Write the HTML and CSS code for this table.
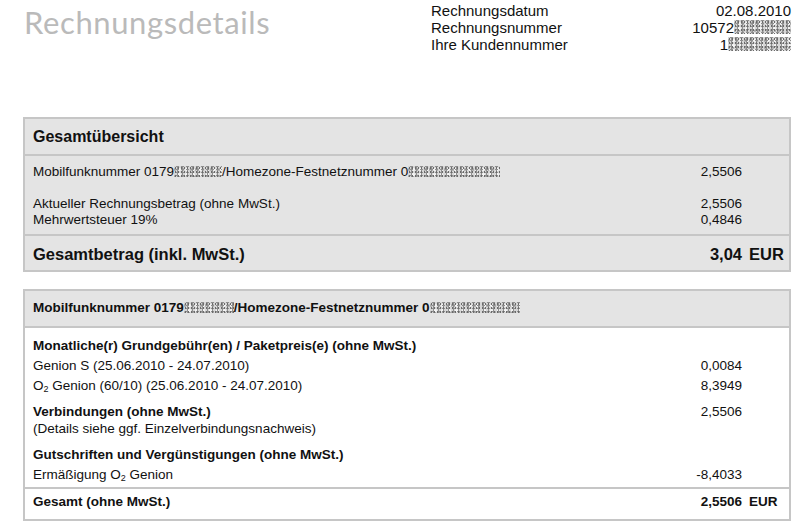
FILE: index.html
```html
<!doctype html>
<html>
	<head>
		<meta charset="utf-8">
		<title>Rechnungsdetails</title>
		<link rel="stylesheet" href="styles.css">
	</head>
	<body>
		<div class="top">
			<h1 class="title">Rechnungsdetails</h1>
			<div class="meta">
				<div class="meta-row"><span>Rechnungsdatum</span><span>02.08.2010</span></div>
				<div class="meta-row"><span>Rechnungsnummer</span><span>10572<i class="blur meta-blur1"></i></span></div>
				<div class="meta-row"><span>Ihre Kundennummer</span><span>1<i class="blur meta-blur2"></i></span></div>
			</div>
		</div>

		<!-- Gesamtuebersicht -->
		<div class="box grey">
			<div class="box-head big">Gesamtübersicht</div>
			<div class="box-body">
				<div class="row"><span>Mobilfunknummer 0179<i class="blur b-a"></i>/Homezone-Festnetznummer 0<i class="blur b-b"></i></span><span class="val">2,5506</span><span></span></div>
				<div class="row empty"><span></span><span></span><span></span></div>
				<div class="row"><span>Aktueller Rechnungsbetrag (ohne MwSt.)</span><span class="val">2,5506</span><span></span></div>
				<div class="row"><span>Mehrwertsteuer 19%</span><span class="val">0,4846</span><span></span></div>
			</div>
			<div class="box-foot big"><div class="row"><span>Gesamtbetrag (inkl. MwSt.)</span><span class="val">3,04</span><span class="unit">EUR</span></div></div>
		</div>

		<!-- Details -->
		<div class="box">
			<div class="box-head small">Mobilfunknummer 0179<i class="blur b-c"></i>/Homezone-Festnetznummer 0<i class="blur b-d"></i></div>
			<div class="box-body detail">
				<div class="group">
					<div class="row b"><span>Monatliche(r) Grundgebühr(en) / Paketpreis(e) (ohne MwSt.)</span><span></span><span></span></div>
					<div class="row"><span>Genion S (25.06.2010 - 24.07.2010)</span><span class="val">0,0084</span><span></span></div>
					<div class="row"><span>O<span class="sub">2</span> Genion (60/10) (25.06.2010 - 24.07.2010)</span><span class="val">8,3949</span><span></span></div>
				</div>
				<div class="group g2">
					<div class="row tall"><span><b>Verbindungen (ohne MwSt.)</b><br>(Details siehe ggf. Einzelverbindungsnachweis)</span><span class="val">2,5506</span><span></span></div>
				</div>
				<div class="group g3">
					<div class="row b"><span>Gutschriften und Vergünstigungen (ohne MwSt.)</span><span></span><span></span></div>
					<div class="row"><span>Ermäßigung O<span class="sub">2</span> Genion</span><span class="val">-8,4033</span><span></span></div>
				</div>
			</div>
			<div class="box-foot small"><div class="row b"><span>Gesamt (ohne MwSt.)</span><span class="val">2,5506</span><span class="unit">EUR</span></div></div>
		</div>
	</body>
</html>
```
FILE: styles.css
```css
* {
	margin: 0;
	padding: 0;
	box-sizing: border-box;
}
body {
	background: #fff;
	color: #111;
	font-family: "Liberation Sans", Arial, sans-serif;
	font-size: 13.5px;
}
.top {
	display: flex;
	justify-content: space-between;
	height: 117px;
	padding: 2px 9px 0 24px;
}
.title {
	font-family: Lato, "Noto Sans", sans-serif;
	font-weight: normal;
	font-size: 31px;
	letter-spacing: 0.6px;
	line-height: 40px;
	color: #bababa;
	margin-top: 0;
}
.meta {
	width: 360px;
	font-size: 15px;
	line-height: 17px;
}
.meta-row {
	display: flex;
	justify-content: space-between;
}
/* verpixelte stellen */
.blur {
	display: inline-block;
	height: 11px;
	vertical-align: -1px;
	background:
		radial-gradient(circle, #6a6a6a 0 0.7px, transparent 1px) 0 0 / 3px 4px,
		radial-gradient(circle, #8e8e8e 0 1px, transparent 1.3px) 1px 2px / 5px 3px,
		radial-gradient(circle, #f4f4f4 0 1.3px, transparent 1.6px) 2px 1px / 7px 5px,
		radial-gradient(circle, #a5a5a5 0 1px, transparent 1.4px) 3px 0 / 4px 7px,
		#d6d6d6;
}
.meta-blur1 { width: 57px; height: 14px; }
.meta-blur2 { width: 63px; height: 14px; }
.b-a { width: 48px; }
.b-b { width: 92px; }
.b-c { width: 50px; }
.b-d { width: 90px; }

.box {
	margin-left: 23px;
	width: 768px;
	border: 2px solid #c6c6c6;
	margin-bottom: 17px;
}
.grey { background: #e4e4e4; }
.box-head {
	background: #e4e4e4;
	border-bottom: 2px solid #c6c6c6;
	padding-left: 8px;
	font-weight: bold;
}
.box-head.big {
	height: 37px;
	padding-top: 8px;
	font-size: 16px;
	line-height: 20px;
}
.box-head.small {
	height: 37px;
	padding-top: 9px;
	line-height: 16px;
}
.box-body {
	padding: 8px 0 6px;
	border-bottom: 2px solid #c6c6c6;
}
.row {
	display: grid;
	grid-template-columns: 1fr auto 47px;
	padding-left: 8px;
	line-height: 16px;
}
.row .val { text-align: right; }
.row .unit { padding-left: 7px; }
.row.empty { height: 16px; }
.b { font-weight: bold; }
.box-foot.big {
	height: 34px;
	padding-top: 8px;
	font-weight: bold;
	font-size: 16.5px;
}
.box-foot.big .row { line-height: 20px; }

.detail { padding: 8px 0 2px; }
.detail .row { padding-top: 2px; padding-bottom: 2px; }
.detail .row.tall { line-height: 17px; }
.g2 { margin-top: 5px; }
.g3 { margin-top: 6px; }
.box-foot.small {
	height: 30px;
	padding-top: 5px;
}
.sub {
	font-size: 9px;
	line-height: 0;
	vertical-align: -2px;
}
```
